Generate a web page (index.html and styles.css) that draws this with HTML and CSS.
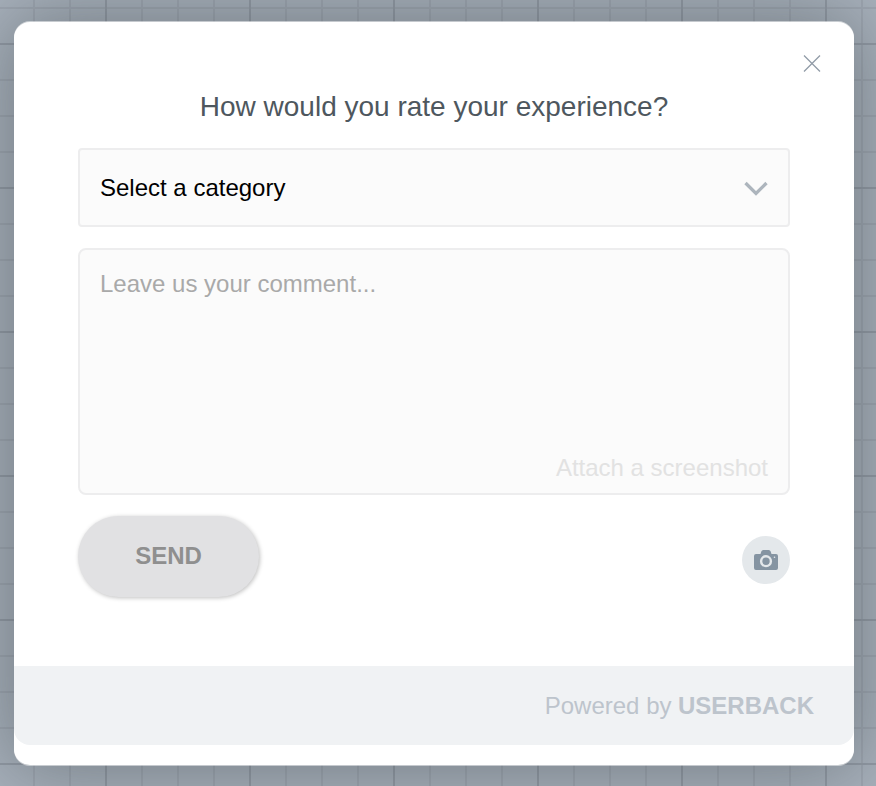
FILE: index.html
```
<!DOCTYPE html>
<html lang="en">
<head>
<meta charset="utf-8">
<title>Feedback</title>
<link rel="stylesheet" href="styles.css">
</head>
<body>
<main class="widget">
  <button class="close" aria-label="Close"><svg width="18" height="19" viewBox="0 0 18 19"><path d="M1 1.500 17 17.500M17 1.500 1 17.500"/></svg></button>
  <form class="form">
    <h1 class="title"><span>How would you rate your experience?</span></h1>
    <div class="select"><span>Select a category</span>
      <svg class="chevron" width="24" height="16" viewBox="0 0 24 16"><path d="M1.500 3 12 13.500 22.500 3"/></svg>
    </div>
    <div class="comment">
      <span class="placeholder">Leave us your comment...</span>
      <span class="attach">Attach a screenshot</span>
    </div>
    <div class="actions">
      <button class="send" type="button"><span>SEND</span></button>
      <button class="camera" type="button" aria-label="Screenshot"><svg width="24" height="20" viewBox="0 0 24 20"><path class="body" d="M2 4h4.500l.8-2.500Q7.800 0 9.200 0h5.600q1.400 0 1.900 1.500l.8 2.500H22q2 0 2 2v12q0 2-2 2H2q-2 0-2-2V6q0-2 2-2Z"/><circle class="lens" cx="12" cy="11.200" r="4.900"/><circle class="dot" cx="20.500" cy="7.300" r=".8"/></svg></button>
    </div>
  </form>
  <footer class="footer"><span class="powered">Powered by</span><strong>USERBACK</strong></footer>
</main>
</body>
</html>
```
FILE: styles.css
```
* { box-sizing: border-box; }
body {
  margin: 0;
  height: 786px;
  padding: 22px 22px 21px 14px;
  overflow: hidden;
  font-family: "Liberation Sans", Arial, sans-serif;
  font-size: 24px;
  background-color: #a9b2bd;
  background-image:
    linear-gradient(90deg, #939ba6 2px, transparent 2px),
    linear-gradient(#939ba6 2px, transparent 2px),
    linear-gradient(90deg, #9fa7b2 2px, transparent 2px),
    linear-gradient(#9fa7b2 2px, transparent 2px);
  background-size: 144px 144px, 144px 144px, 36px 36px, 36px 36px;
  background-position: 105px 0, 0 43px, 33px 0, 0 7px;
}
button { border: 0; padding: 0; font: inherit; }
svg { display: block; fill: none; }
.widget {
  position: relative;
  height: 743px;
  display: flex;
  flex-direction: column;
  background: #fff;
  border-radius: 16px;
  box-shadow:
    0 -1px 0 rgba(255, 255, 255, .5),
    0 1px 0 rgba(255, 255, 255, .5),
    0 0 80px 6px rgba(50, 58, 62, .46);
}
.close { position: absolute; top: 32px; right: 33px; background: none; }
.close path { stroke: #919ba7; stroke-width: 1.300; }
.form { padding: 63px 64px 0; height: 643.500px; }
.title {
  margin: 0;
  height: 63px;
  line-height: 44px;
  font-size: 28px;
  font-weight: 400;
  text-align: center;
  color: #4e575e;
}
.select {
  display: flex;
  align-items: center;
  justify-content: space-between;
  height: 79px;
  padding: 0 20px;
  border: 2px solid #ededee;
  border-radius: 4px;
  background: #fbfbfb;
  color: #000;
}
.chevron path { stroke: #adb5bd; stroke-width: 3.300; }
.comment {
  display: flex;
  flex-direction: column;
  justify-content: space-between;
  height: 247px;
  margin-top: 21px;
  padding: 20px 20px 11px;
  border: 2px solid #ededee;
  border-radius: 8px;
  background: #fbfbfb;
  line-height: 28px;
  color: #a9a9a9;
}
.attach { align-self: flex-end; color: #e2e2e2; }
.actions { display: flex; align-items: center; justify-content: space-between; height: 81px; margin-top: 21px; }
.send {
  width: 181px;
  height: 81px;
  padding-bottom: 2px;
  border-radius: 41px;
  background: #e1e1e3;
  box-shadow: 1px 1px 4px rgba(0, 0, 0, .25);
  color: #8f8f8f;
  font-weight: 700;
}
.camera {
  display: grid;
  place-items: center;
  width: 48px;
  height: 48px;
  margin-top: 6px;
  border-radius: 50%;
  background: #e4e8eb;
}
.body { fill: #8594a2; }
.lens { stroke: #e4e8eb; stroke-width: 2.400; }
.dot { fill: #e4e8eb; }
.footer {
  display: flex;
  align-items: center;
  justify-content: flex-end;
  gap: 6.500px;
  height: 79.500px;
  padding: 1px 40px 0 0;
  border-radius: 0 0 16px 16px;
  background: #f0f2f4;
  color: #bdc4cc;
}
```
